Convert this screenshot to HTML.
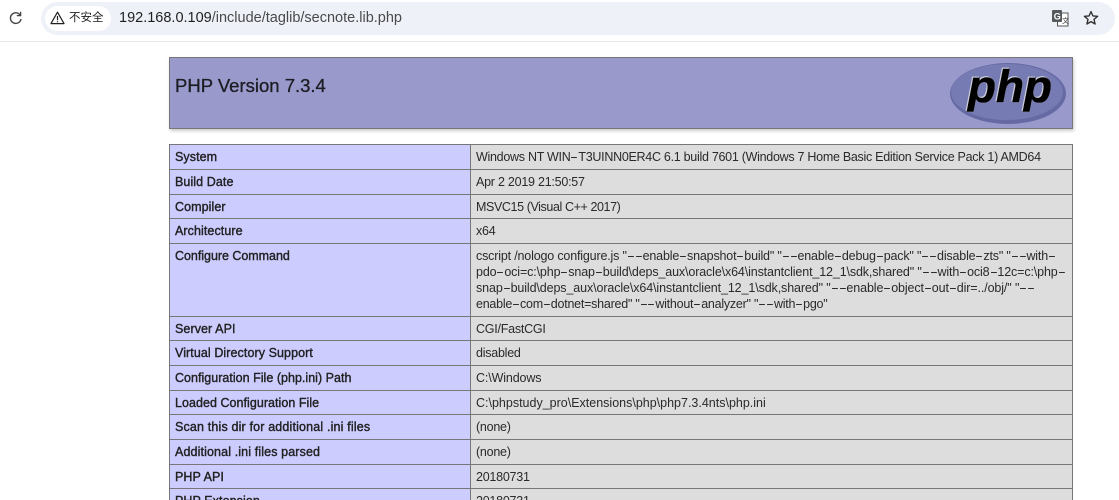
<!DOCTYPE html>
<html><head><meta charset="utf-8">
<style>
html,body{margin:0;padding:0;width:1119px;height:500px;overflow:hidden;background:#fff}
body{position:relative;font-family:"Liberation Sans","Noto Sans CJK SC",sans-serif;color:#222;filter:blur(.3px)}
.abs{position:absolute}
#bar{left:41px;top:2px;width:1074px;height:33px;background:#eef1f8;border-radius:17px}
#line{left:0;top:41px;width:1119px;height:1px;background:#e8e8e8}
#chip{left:45px;top:6px;width:66px;height:25px;background:#fff;border-radius:13px}
#sec{left:69px;top:10px;font-size:11.5px;line-height:16px;color:#222}
#url{left:119px;top:9px;font-size:14.5px;line-height:18px;color:#4a4a4a;white-space:nowrap}
#url b{font-weight:normal;color:#1f1f1f}
#hdr{left:169px;top:57px;width:902px;height:70px;background:#9999cc;border:1px solid #777;box-shadow:1px 2px 3px #ccc}
#title{left:175px;top:74px;font-size:18.5px;line-height:24px;color:#1c1c22;white-space:nowrap;-webkit-text-stroke:.3px #1c1c22}
.l,.r{position:absolute;box-sizing:border-box;border:1px solid #777;font-size:12.5px;line-height:16px;padding:4px 0 0 5px;white-space:nowrap;color:#222}
.l{left:169px;width:302px;background:#ccccff;letter-spacing:.08px;-webkit-text-stroke:.38px #222}
.r{left:470px;width:603px;background:#dddddd;color:#2a2a2a;letter-spacing:-.24px}
.r i{font-style:normal;display:inline-block;width:7.9px;transform:scaleX(1.9);transform-origin:0 50%}
.r span{display:block}
</style></head><body>
<div class="abs" id="bar"></div>
<div class="abs" id="line"></div>
<div class="abs" id="chip"></div>
<svg class="abs" style="left:8px;top:10px" width="16" height="16" viewBox="0 0 16 16" fill="none" stroke="#444" stroke-width="1.4"><path d="M12.200 5.200A5.300 5.300 0 1 0 13 9"/><path d="M12.600 1.800V5.600H8.800" stroke-width="1.300"/></svg>
<svg class="abs" style="left:50px;top:11px" width="15" height="14" viewBox="0 0 15 14" fill="none" stroke="#222" stroke-width="1.2"><path d="M7.500 1.200L14 12.600H1Z" stroke-linejoin="round"/><path d="M7.500 5V9.200M7.500 10.200V11.400"/></svg>
<div class="abs" id="sec">不安全</div>
<div class="abs" id="url"><b>192.168.0.109</b>/include/taglib/secnote.lib.php</div>
<svg class="abs" style="left:1051px;top:9px" width="18" height="18" viewBox="0 0 18 18"><rect x="6.500" y="4" width="10.500" height="13" fill="#fff" stroke="#555" stroke-width="1"/><rect x="1" y="1" width="10" height="12" rx="1" fill="#555a5e"/><text x="2.800" y="10.500" font-size="9" font-weight="bold" fill="#fff" font-family="Liberation Sans">G</text><text x="11" y="14" font-size="7" fill="#333" font-family="Liberation Sans">文</text></svg>
<svg class="abs" style="left:1083px;top:10px" width="16" height="16" viewBox="0 0 16 16" fill="none" stroke="#333" stroke-width="1.4"><path d="M8 1.600L9.900 5.900L14.600 6.300L11 9.400L12.100 14L8 11.600L3.900 14L5 9.400L1.400 6.300L6.100 5.900Z" stroke-linejoin="round"/></svg>

<div class="abs" id="hdr"></div>
<div class="abs" id="title">PHP Version 7.3.4</div>
<svg class="abs" style="left:949px;top:62px" width="120" height="64" viewBox="0 0 120 64">
<ellipse cx="59" cy="31.500" rx="58" ry="30.500" fill="#666aa4"/>
<ellipse cx="58" cy="30" rx="56" ry="28" fill="#777bb3"/>
<text x="19" y="40" font-size="45" font-weight="bold" font-style="italic" font-family="Liberation Sans" fill="#000" stroke="#000" stroke-width=".6" textLength="84" lengthAdjust="spacingAndGlyphs" style="filter:drop-shadow(.7px .7px 0 #fff) drop-shadow(-.4px -.4px 0 #ccd)">php</text>
</svg>

<div class="l" style="top:144px;height:26px">System</div><div class="r" style="top:144px;height:26px;letter-spacing:-.28px">Windows NT WIN<i>-</i>T3UINN0ER4C 6.1 build 7601 (Windows 7 Home Basic Edition Service Pack 1) AMD64</div>
<div class="l" style="top:169px;height:26px">Build Date</div><div class="r" style="top:169px;height:26px">Apr 2 2019 21:50:57</div>
<div class="l" style="top:194px;height:25px">Compiler</div><div class="r" style="top:194px;height:25px;letter-spacing:-.4px">MSVC15 (Visual C++ 2017)</div>
<div class="l" style="top:218px;height:26px">Architecture</div><div class="r" style="top:218px;height:26px">x64</div>
<div class="l" style="top:243px;height:74px;letter-spacing:-.03px">Configure Command</div><div class="r" style="top:243px;height:74px"><span style="letter-spacing:-.17px">cscript /nologo configure.js "<i>-</i><i>-</i>enable<i>-</i>snapshot<i>-</i>build" "<i>-</i><i>-</i>enable<i>-</i>debug<i>-</i>pack" "<i>-</i><i>-</i>disable<i>-</i>zts" "<i>-</i><i>-</i>with<i>-</i></span><span style="letter-spacing:-.13px">pdo<i>-</i>oci=c:\php<i>-</i>snap<i>-</i>build\deps_aux\oracle\x64\instantclient_12_1\sdk,shared" "<i>-</i><i>-</i>with<i>-</i>oci8<i>-</i>12c=c:\php<i>-</i></span><span style="letter-spacing:-.11px">snap<i>-</i>build\deps_aux\oracle\x64\instantclient_12_1\sdk,shared" "<i>-</i><i>-</i>enable<i>-</i>object<i>-</i>out<i>-</i>dir=../obj/" "<i>-</i><i>-</i></span><span>enable<i>-</i>com<i>-</i>dotnet=shared" "<i>-</i><i>-</i>without<i>-</i>analyzer" "<i>-</i><i>-</i>with<i>-</i>pgo"</span></div>
<div class="l" style="top:316px;height:25px">Server API</div><div class="r" style="top:316px;height:25px">CGI/FastCGI</div>
<div class="l" style="top:340px;height:26px">Virtual Directory Support</div><div class="r" style="top:340px;height:26px">disabled</div>
<div class="l" style="top:365px;height:26px;letter-spacing:.02px">Configuration File (php.ini) Path</div><div class="r" style="top:365px;height:26px;letter-spacing:-.13px">C:\Windows</div>
<div class="l" style="top:390px;height:25px;letter-spacing:.04px">Loaded Configuration File</div><div class="r" style="top:390px;height:25px;letter-spacing:0">C:\phpstudy_pro\Extensions\php\php7.3.4nts\php.ini</div>
<div class="l" style="top:414px;height:26px;letter-spacing:.16px">Scan this dir for additional .ini files</div><div class="r" style="top:414px;height:26px">(none)</div>
<div class="l" style="top:439px;height:26px;letter-spacing:.12px">Additional .ini files parsed</div><div class="r" style="top:439px;height:26px">(none)</div>
<div class="l" style="top:464px;height:25px">PHP API</div><div class="r" style="top:464px;height:25px">20180731</div>
<div class="l" style="top:488px;height:26px">PHP Extension</div><div class="r" style="top:488px;height:26px">20180731</div>
</body></html>
